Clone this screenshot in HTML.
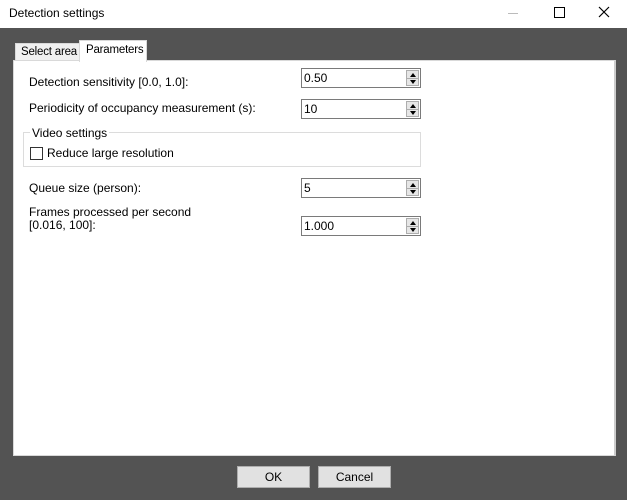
<!DOCTYPE html>
<html><head><style>
*{margin:0;padding:0;box-sizing:border-box}
body{width:627px;height:500px;background:#535353;font-family:"Liberation Sans",sans-serif;font-size:12px;color:#000;position:relative;overflow:hidden}
.a{position:absolute;white-space:nowrap}
.title{left:0;top:0;width:627px;height:28px;background:#fff}
.inp{position:absolute;left:301px;width:120px;height:20px;border:1px solid #7a7a7a;background:#fff;padding:2px 0 0 2px}
.spin{position:absolute;right:1px;top:1px;width:13px;height:16px;background:#e6e6e6;border:1px solid #adadad}
.spin:before{content:"";position:absolute;left:3px;top:2px;border:3px solid transparent;border-bottom:4px solid #000;border-top:0}
.spin:after{content:"";position:absolute;left:3px;top:9px;border:3px solid transparent;border-top:4px solid #000;border-bottom:0}
.spin i{position:absolute;left:0;right:0;top:7px;border-top:1px solid #adadad}
.btn{position:absolute;top:466px;width:73px;height:22px;background:#e1e1e1;border:1px solid #adadad;text-align:center;line-height:20px}
</style></head><body>
<div class="a title"></div>
<div class="a" style="left:9px;top:6px;font-size:12px">Detection settings</div>
<div class="a" style="left:508px;top:13px;width:10px;border-top:1px solid #bbb"></div>
<div class="a" style="left:554px;top:7px;width:11px;height:11px;border:1px solid #000"></div>
<svg class="a" style="left:598px;top:6px" width="12" height="12"><path d="M1 1L11 11M11 1L1 11" stroke="#000" stroke-width="1.2"/></svg>
<div class="a" style="left:15px;top:43px;width:65px;height:18px;background:#f0f0f0;border:1px solid #d9d9d9;padding:2px 0 0 5px;font-size:11.5px;letter-spacing:-0.2px">Select area</div>
<div class="a" style="left:13px;top:60px;width:603px;height:396px;background:#fff;border:1px solid #d9d9d9;border-right:2px solid #ccc"></div>
<div class="a" style="left:79px;top:40px;width:68px;height:22px;background:#fff;border:1px solid #d9d9d9;border-bottom:0;padding:3px 0 0 6px;font-size:11.5px;letter-spacing:-0.2px">Parameters</div>
<div class="a" style="left:29px;top:75px">Detection sensitivity [0.0, 1.0]:</div>
<div class="a" style="left:29px;top:101px">Periodicity of occupancy measurement (s):</div>
<div class="inp" style="top:68px">0.50<div class="spin"><i></i></div></div>
<div class="inp" style="top:99px">10<div class="spin"><i></i></div></div>
<div class="a" style="left:23px;top:132px;width:398px;height:35px;border:1px solid #dcdcdc"></div>
<div class="a" style="left:30px;top:126px;background:#fff;padding:0 2px">Video settings</div>
<div class="a" style="left:30px;top:147px;width:13px;height:13px;border:1px solid #333"></div>
<div class="a" style="left:47px;top:146px">Reduce large resolution</div>
<div class="a" style="left:29px;top:181px">Queue size (person):</div>
<div class="inp" style="top:178px">5<div class="spin"><i></i></div></div>
<div class="a" style="left:29px;top:206px;line-height:13px">Frames processed per second<br>[0.016, 100]:</div>
<div class="inp" style="top:216px">1.000<div class="spin"><i></i></div></div>
<div class="btn" style="left:237px">OK</div>
<div class="btn" style="left:318px">Cancel</div>
</body></html>
